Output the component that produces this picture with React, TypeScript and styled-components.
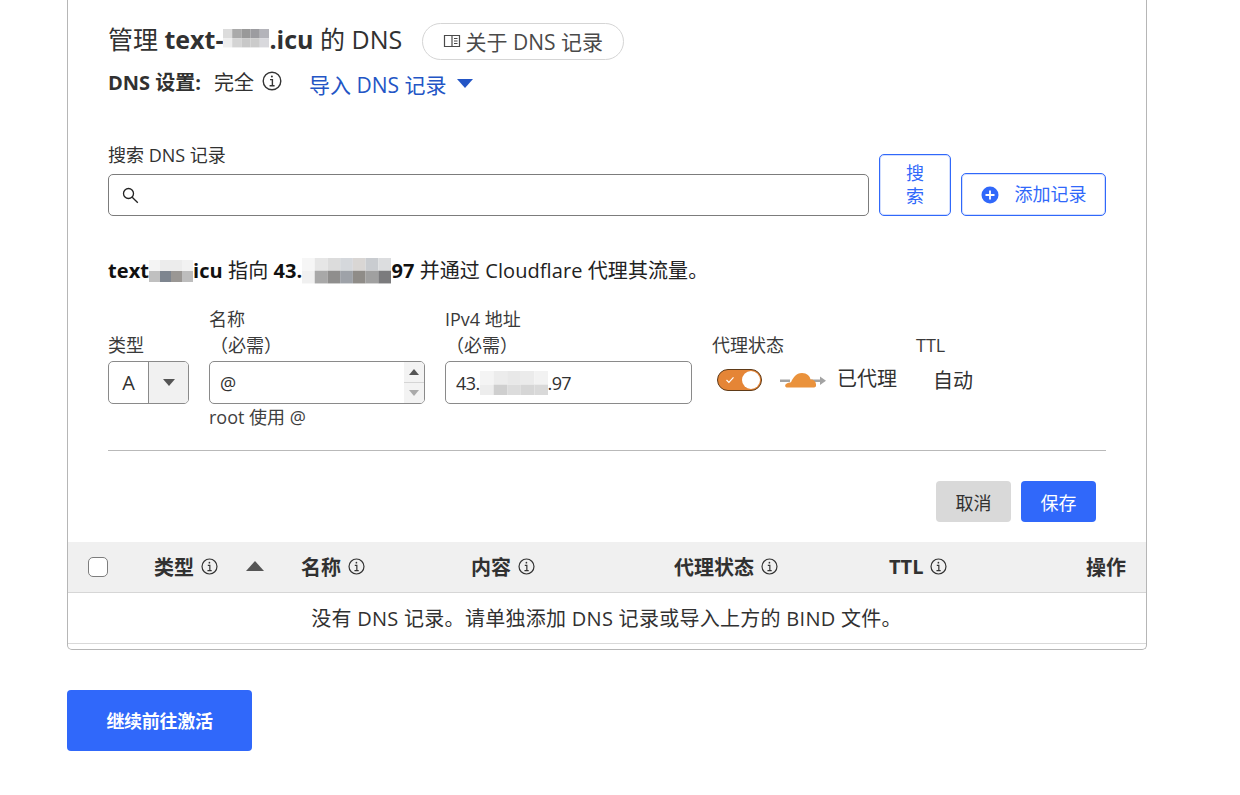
import React from 'react';
import styled, { createGlobalStyle } from 'styled-components';

const blue = '#3068fa';
const ink = '#313131';

const GlobalStyle = createGlobalStyle`
  html, body {
    margin: 0;
    padding: 0;
    background: #fff;
  }
  body {
    font-family: "Open Sans", "Noto Sans CJK SC", sans-serif;
    color: ${ink};
    overflow: hidden;
  }
`;

const Page = styled.div`
  width: 1240px;
  height: 795px;
  padding-left: 67px;
  box-sizing: border-box;
`;

const Card = styled.div`
  width: 1080px;
  height: 650px;
  box-sizing: border-box;
  border: 1px solid #b6b6b6;
  border-top: 0;
  border-radius: 0 0 5px 5px;
  display: flex;
  flex-direction: column;
`;

const Body = styled.div`
  padding: 23px 40px 0;
  height: 542px;
  box-sizing: border-box;
`;

const TitleRow = styled.div`
  display: flex;
  align-items: center;
  gap: 20px;
  height: 37px;
`;

const Title = styled.h2`
  margin: -6px 0 0;
  font-size: 25px;
  font-weight: 400;
  line-height: 32px;
  white-space: nowrap;
  display: flex;
  align-items: center;

  b {
    font-weight: 700;
  }
`;

const PillLink = styled.a`
  display: flex;
  align-items: center;
  justify-content: center;
  gap: 4px;
  width: 202px;
  height: 37px;
  padding-bottom: 2px;
  box-sizing: border-box;
  border: 1px solid #d5d5d5;
  border-radius: 19px;
  font-size: 21px;
  color: #4a4a4a;
  white-space: nowrap;
`;

const SettingRow = styled.div`
  display: flex;
  align-items: center;
  margin-top: 7px;
  height: 28px;
  font-size: 20px;
  white-space: nowrap;

  b {
    font-weight: 700;
    margin-right: 13px;
  }
`;

const InfoGap = styled.span`
  display: flex;
  margin-left: 8px;
`;

const ImportLink = styled.a`
  display: flex;
  align-items: center;
  gap: 11px;
  margin: 5px 0 0 27px;
  font-size: 21px;
  color: #2355c5;
`;

const Caret = styled.span<{ $size: number; $color: string; $up?: boolean }>`
  display: inline-block;
  width: 0;
  height: 0;
  border-left: ${(p) => p.$size}px solid transparent;
  border-right: ${(p) => p.$size}px solid transparent;
  ${(p) => (p.$up ? 'border-bottom' : 'border-top')}: ${(p) => p.$size * 1.2}px solid ${(p) => p.$color};
`;

const SearchSection = styled.div`
  display: flex;
  align-items: flex-end;
  margin-top: 50px;
  gap: 10px;
`;

const SearchField = styled.label`
  display: flex;
  flex-direction: column;
  width: 761px;
  font-size: 18px;
  line-height: 26px;
  gap: 6px;
  margin-top: -3px;
`;

const SearchBox = styled.div`
  display: flex;
  align-items: center;
  height: 42px;
  box-sizing: border-box;
  border: 1px solid #7c7c7c;
  border-radius: 5px;
  padding-left: 13px;
`;

const OutlineButton = styled.button<{ $w: number; $h: number }>`
  display: flex;
  align-items: center;
  justify-content: center;
  width: ${(p) => p.$w}px;
  height: ${(p) => p.$h}px;
  padding: 0 18px;
  box-sizing: border-box;
  background: #fff;
  border: 1px solid ${blue};
  border-radius: 5px;
  box-shadow: inset 0 0 0 1px rgba(48, 104, 250, 0.22);
  color: ${blue};
  font: inherit;
  font-size: 18px;
  line-height: 23px;
`;

const AddIcon = styled.svg`
  margin-right: 16px;
  flex: none;
`;

const Summary = styled.p`
  margin: 41px 0 0;
  height: 28px;
  font-size: 20px;
  line-height: 28px;
  letter-spacing: 0.08px;
  white-space: nowrap;
  display: flex;
  align-items: center;
  color: #222;

  b {
    font-weight: 700;
    color: #111;
  }
`;

const FormGrid = styled.div`
  display: grid;
  grid-template-columns: 81px 216px 247px 184px 60px;
  column-gap: 20px;
  margin-top: 21px;
  font-size: 18px;
`;

const FieldLabel = styled.div`
  align-self: end;
  line-height: 26px;
  padding-bottom: 3px;
  color: #3a3a3a;
`;

const Required = styled.div`
  padding-left: 1px;
`;

const SelectBox = styled.div`
  display: flex;
  height: 43px;
  box-sizing: border-box;
  border: 1px solid #8a8a8a;
  border-radius: 5px;
  overflow: hidden;
  font-size: 20px;
`;

const SelectValue = styled.div`
  width: 39px;
  display: flex;
  align-items: center;
  justify-content: center;
  border-right: 1px solid #8a8a8a;
`;

const SelectArrow = styled.div`
  flex: 1;
  background: #f1f1f1;
  display: flex;
  align-items: center;
  justify-content: center;
`;

const TextBox = styled.div`
  position: relative;
  display: flex;
  align-items: center;
  height: 43px;
  box-sizing: border-box;
  padding-left: 10px;
  border: 1px solid #8a8a8a;
  border-radius: 5px;
  overflow: hidden;
  font-size: 18px;
`;

const IpPart = styled.span`
  letter-spacing: -0.6px;
`;

const Spinner = styled.div`
  position: absolute;
  top: 0;
  right: 0;
  bottom: 0;
  width: 20px;
  background: #f3f3f3;
  display: flex;
  flex-direction: column;
`;

const SpinPart = styled.div`
  flex: 1;
  display: flex;
  align-items: center;
  justify-content: center;

  & + & {
    border-top: 1px solid #d5d5d5;
  }
`;

const ProxyCell = styled.div`
  display: flex;
  align-items: center;
  height: 37px;
  padding-left: 5px;
  font-size: 20px;
  white-space: nowrap;
`;

const ProxyLabel = styled.span`
  padding-bottom: 5px;
`;

const Toggle = styled.div`
  position: relative;
  width: 45px;
  height: 22px;
  box-sizing: border-box;
  background: #e58536;
  border: 1px solid #5f3a17;
  border-radius: 11px;
  margin-right: 18px;
  display: flex;
  align-items: center;
  padding-left: 7px;
  flex: none;
`;

const Knob = styled.span`
  position: absolute;
  right: 1px;
  top: 1px;
  width: 18px;
  height: 18px;
  background: #fff;
  border-radius: 50%;
`;

const CloudIcon = styled.svg`
  margin-right: 11px;
  flex: none;
`;

const TtlCell = styled.div`
  height: 43px;
  display: flex;
  align-items: center;
  padding: 0 0 7px 17px;
  box-sizing: border-box;
  font-size: 20px;
  white-space: nowrap;
`;

const Hint = styled.div`
  grid-column: 2;
  line-height: 26px;
  color: #3f3f3f;
`;

const Divider = styled.hr`
  margin: 20px 0 0;
  border: 0;
  border-top: 1px solid #b9b9b9;
`;

const Actions = styled.div`
  display: flex;
  justify-content: flex-end;
  gap: 10px;
  margin-top: 30px;
  padding-right: 10px;
`;

const SolidButton = styled.button<{ $primary?: boolean }>`
  width: 75px;
  height: 41px;
  border: 0;
  border-radius: 4px;
  background: ${(p) => (p.$primary ? blue : '#d9d9d9')};
  color: ${(p) => (p.$primary ? '#fff' : ink)};
  font: inherit;
  font-size: 18px;
`;

const TableHead = styled.div`
  display: grid;
  grid-template-columns: 86px 147px 170px 203px 215px 127px 1fr;
  align-items: center;
  height: 51px;
  box-sizing: border-box;
  background: #f0f0f0;
  border-bottom: 1px solid #d6d6d6;
`;

const HeadCell = styled.div<{ $right?: boolean }>`
  display: flex;
  align-items: center;
  justify-content: ${(p) => (p.$right ? 'flex-end' : 'flex-start')};
  padding-right: ${(p) => (p.$right ? 20 : 0)}px;
  padding-bottom: 2px;
  gap: 7px;
  font-size: 20px;
  font-weight: 700;
  white-space: nowrap;
`;

const SortCaret = styled.span`
  display: flex;
  margin-left: 21px;
`;

const CheckCell = styled.div`
  padding-left: 20px;
  display: flex;
`;

const CheckBox = styled.span`
  display: block;
  width: 20px;
  height: 20px;
  box-sizing: border-box;
  background: #fff;
  border: 1px solid #7d7d7d;
  border-radius: 5px;
`;

const EmptyRow = styled.div`
  height: 51px;
  box-sizing: border-box;
  border-bottom: 1px solid #d9d9d9;
  display: flex;
  align-items: center;
  justify-content: center;
  font-size: 20px;
  letter-spacing: 0.28px;
  padding: 0 1px 2px 0;
`;

const ContinueButton = styled.button`
  display: block;
  width: 185px;
  height: 61px;
  margin-top: 40px;
  padding-bottom: 3px;
  border: 0;
  border-radius: 4px;
  background: ${blue};
  color: #fff;
  font: inherit;
  font-size: 18px;
  letter-spacing: -0.3px;
  font-weight: 700;
`;

const InlineMosaic = styled.svg<{ $shift?: number }>`
  flex: none;
  margin-top: ${(p) => p.$shift ?? 0}px;
  filter: blur(0.5px);
`;

const Info: React.FC<{ size?: number }> = ({ size = 17 }) => (
  <svg width={size} height={size} viewBox="0 0 20 20" fill="none" stroke="#333" strokeWidth="1.4">
    <circle cx="10" cy="10" r="8.8" />
    <path d="M8 8.6h2.4v6M7.6 14.8h5" />
    <circle cx="9.9" cy="5.5" r="1" fill="#333" stroke="none" />
  </svg>
);

type Cell = [number, number, string];

const Mosaic: React.FC<{ w: number; h: number; step: number; cells: Cell[]; shift?: number }> = ({
  w,
  h,
  step,
  cells,
  shift
}) => (
  <InlineMosaic $shift={shift} width={w} height={h} viewBox={`0 0 ${w} ${h}`}>
    {cells.map(([x, y, c]) => (
      <rect key={`${x}-${y}`} x={x * step} y={y * step} width={step} height={step} fill={c} />
    ))}
  </InlineMosaic>
);

const titleCells: Cell[] = [
  [0, 0, '#dcdcdc'], [1, 0, '#aaaaaa'], [2, 0, '#999999'], [3, 0, '#9c9ca0'], [4, 0, '#b4b4ba'],
  [0, 1, '#eeeeee'], [1, 1, '#d4d4d4'], [2, 1, '#c8c8c8'], [3, 1, '#cbcbcb'], [4, 1, '#d8d8dc']
];

const summaryNameCells: Cell[] = [
  [0, 0, '#f4f4f4'], [1, 0, '#ececec'], [2, 0, '#ececec'], [3, 0, '#f2f2f2'],
  [0, 1, '#c0c0c0'], [1, 1, '#7e858f'], [2, 1, '#9a9794'], [3, 1, '#bdbdbd']
];

const summaryIpCells: Cell[] = [
  [0, 0, '#f6f6f6'], [1, 0, '#e6e6e6'], [2, 0, '#dcdcdc'], [3, 0, '#d5d8dc'], [4, 0, '#d9d6d4'], [5, 0, '#c9ccd0'], [6, 0, '#dcdddf'],
  [0, 1, '#f0f0f0'], [1, 1, '#a8a8a8'], [2, 1, '#8f8e8d'], [3, 1, '#9ea2a8'], [4, 1, '#8f8c88'], [5, 1, '#a0a0a0'], [6, 1, '#7b7b7d']
];

const ipCells: Cell[] = [
  [0, 0, '#f4f4f4'], [1, 0, '#ececec'], [2, 0, '#e8e8e8'], [3, 0, '#ebebeb'], [4, 0, '#f2f2f2'],
  [0, 1, '#ededed'], [1, 1, '#cfcfcf'], [2, 1, '#dcdcdc'], [3, 1, '#d6d6d6'], [4, 1, '#d9d9d9']
];

const App: React.FC = () => (
  <>
    <GlobalStyle />
    <Page>
      <Card>
        <Body>
          <TitleRow>
            <Title>
              管理&nbsp;<b>text-</b>
              <Mosaic w={46} h={24} step={9.2} cells={titleCells} shift={4} />
              <b>.icu</b>&nbsp;的 DNS
            </Title>
            <PillLink>
              <svg width="18" height="16" viewBox="0 0 18 16" fill="none" stroke="#4a4a4a" strokeWidth="1.2">
                <path d="M9 2.5H1.5v11H9zM9 2.5h7.5v11H9z" />
                <path d="M11 5.5h3.5M11 8h3.5M11 10.5h3.5" />
              </svg>
              关于 DNS 记录
            </PillLink>
          </TitleRow>
          <SettingRow>
            <b>DNS 设置:</b>完全
            <InfoGap>
              <Info size={20} />
            </InfoGap>
            <ImportLink>
              导入 DNS 记录
              <Caret $size={8} $color="#2355c5" />
            </ImportLink>
          </SettingRow>
          <SearchSection>
            <SearchField>
              搜索 DNS 记录
              <SearchBox>
                <svg width="17" height="17" viewBox="0 0 17 17" fill="none" stroke="#222" strokeWidth="1.3">
                  <circle cx="6.5" cy="6.5" r="5" />
                  <path d="M10.2 10.2l5.6 5.6" />
                </svg>
              </SearchBox>
            </SearchField>
            <OutlineButton $w={72} $h={62}>搜索</OutlineButton>
            <OutlineButton $w={145} $h={43}>
              <AddIcon width="18" height="18" viewBox="0 0 18 18">
                <circle cx="9" cy="9" r="8.5" fill={blue} />
                <path d="M9 4.5v9M4.5 9h9" stroke="#fff" strokeWidth="1.8" />
              </AddIcon>
              添加记录
            </OutlineButton>
          </SearchSection>
          <Summary>
            <b>text</b>
            <Mosaic w={44} h={22} step={11} cells={summaryNameCells} />
            <b>icu</b>&nbsp;指向&nbsp;<b>43.</b>
            <Mosaic w={89} h={26} step={12.72} cells={summaryIpCells} />
            <b>97</b>&nbsp;并通过 Cloudflare 代理其流量。
          </Summary>
          <FormGrid>
            <FieldLabel>类型</FieldLabel>
            <FieldLabel>
              名称
              <Required>（必需）</Required>
            </FieldLabel>
            <FieldLabel>
              IPv4 地址
              <Required>（必需）</Required>
            </FieldLabel>
            <FieldLabel>代理状态</FieldLabel>
            <FieldLabel>TTL</FieldLabel>
            <SelectBox>
              <SelectValue>A</SelectValue>
              <SelectArrow>
                <Caret $size={6} $color="#555" />
              </SelectArrow>
            </SelectBox>
            <TextBox>
              @
              <Spinner>
                <SpinPart>
                  <Caret $size={5} $color="#555" $up />
                </SpinPart>
                <SpinPart>
                  <Caret $size={5} $color="#aaa" />
                </SpinPart>
              </Spinner>
            </TextBox>
            <TextBox>
              <IpPart>43.</IpPart>
              <Mosaic w={68} h={24} step={13.6} cells={ipCells} />
              <IpPart>.97</IpPart>
            </TextBox>
            <ProxyCell>
              <Toggle>
                <svg width="10" height="8" viewBox="0 0 10 8" fill="none" stroke="#fff" strokeWidth="1.2">
                  <path d="M1.5 4l2.4 2.4 4.6-5" />
                </svg>
                <Knob />
              </Toggle>
              <CloudIcon width="46" height="20" viewBox="0 0 46 20">
                <path d="M0 9.5h10v2.6H0zM30 9.5h11v2.6H30z" fill="#a3a3a3" />
                <path d="M40 6.5l6 4.3-6 4.3z" fill="#a3a3a3" />
                <path
                  d="M7.5 17.5C5 17.5 4.5 15.5 6 14c1.5-1.5 3.5-1.5 5-1.8C13 8 16 3 22 3c5 0 8 3 8.5 6.5C33.5 9 36 11.5 36 14.5c.3 2-.5 3-2 3z"
                  fill="#ea923c"
                />
              </CloudIcon>
              <ProxyLabel>已代理</ProxyLabel>
            </ProxyCell>
            <TtlCell>自动</TtlCell>
            <Hint>root 使用 @</Hint>
          </FormGrid>
          <Divider />
          <Actions>
            <SolidButton>取消</SolidButton>
            <SolidButton $primary>保存</SolidButton>
          </Actions>
        </Body>
        <TableHead>
          <CheckCell>
            <CheckBox />
          </CheckCell>
          <HeadCell>
            类型 <Info />
            <SortCaret>
              <Caret $size={9} $color="#555" $up />
            </SortCaret>
          </HeadCell>
          <HeadCell>
            名称 <Info />
          </HeadCell>
          <HeadCell>
            内容 <Info />
          </HeadCell>
          <HeadCell>
            代理状态 <Info />
          </HeadCell>
          <HeadCell>
            TTL <Info />
          </HeadCell>
          <HeadCell $right>操作</HeadCell>
        </TableHead>
        <EmptyRow>没有 DNS 记录。请单独添加 DNS 记录或导入上方的 BIND 文件。</EmptyRow>
      </Card>
      <ContinueButton>继续前往激活</ContinueButton>
    </Page>
  </>
);

export default App;
